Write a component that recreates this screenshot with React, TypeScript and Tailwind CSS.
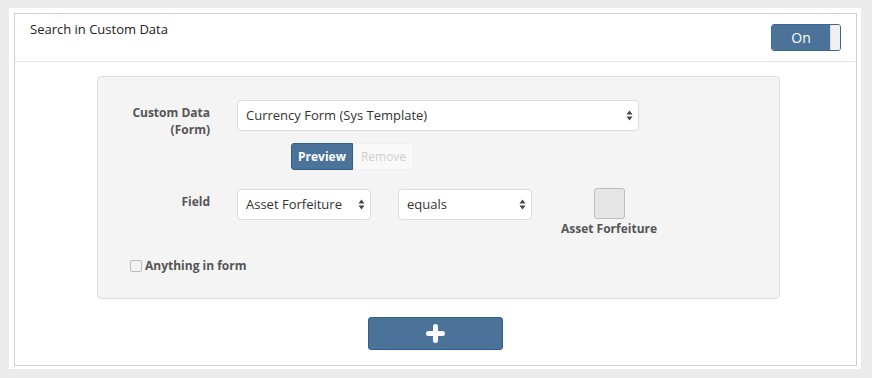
import React from "react";

const font = { fontFamily: '"Open Sans", "Liberation Sans", sans-serif' };

function Arrows() {
  return (
    <svg width="7" height="11" viewBox="0 0 7 11" className="shrink-0">
      <path d="M3.5 0.5 L6.5 4.5 L0.5 4.5 Z" fill="#444" />
      <path d="M3.5 10.5 L6.5 6.5 L0.5 6.5 Z" fill="#444" />
    </svg>
  );
}

function Select({ text, w }: { text: string; w: string }) {
  return (
    <div
      className={`${w} h-[31px] bg-white border border-[#dcdcdc] rounded-[4px] flex items-center justify-between pl-[8px] pr-[5px] text-[13px] text-[#333]`}
    >
      <span>{text}</span>
      <Arrows />
    </div>
  );
}

export default function App() {
  return (
    <div className="w-[872px] h-[378px] bg-[#ebebeb] pt-[8px] pl-[9px]" style={font}>
      <div className="w-[852px] h-[361px] bg-white pt-[5px] pl-[5px] pr-[4px] pb-[3px]">
        <div className="h-full border border-[#d2d2d2] flex flex-col">
          {/* header */}
          <div className="h-[48px] border-b border-[#e3e3e3] flex justify-between shrink-0">
            <div className="pl-[15px] pt-[6px] text-[13px] text-[#222]">Search in Custom Data</div>
            <div className="mt-[10px] mr-[15px] h-[27px] flex rounded-[3px] overflow-hidden border border-[#3c6690]">
              <div className="w-[58px] bg-[#4b739a] text-white text-[14px] flex items-center justify-center">On</div>
              <div className="w-[10px] bg-[#efefef] border-l border-[#dcdcdc]" />
            </div>
          </div>

          {/* body */}
          <div className="flex flex-col">
            <div className="ml-[82px] mt-[14px] w-[683px] h-[223px] bg-[#f4f4f4] border border-[#dedede] rounded-[4px] pt-[23px] pl-[15px]">
              {/* row 1 */}
              <div className="flex">
                <div className="w-[97px] text-right text-[12px] font-bold text-[#555] leading-[17px] pt-[4px]">
                  Custom Data (Form)
                </div>
                <div className="ml-[27px] flex flex-col">
                  <Select text="Currency Form (Sys Template)" w="w-[402px]" />
                  <div className="ml-[54px] mt-[12px] flex">
                    <div className="w-[62px] h-[27px] bg-[#4b739a] border border-[#2f5f8a] rounded-l-[3px] text-white text-[12px] font-bold flex items-center justify-center">
                      Preview
                    </div>
                    <div className="w-[61px] h-[27px] bg-[#f9f9f9] border border-[#efefef] rounded-r-[3px] text-[#cfcfcf] text-[12px] flex items-center justify-center">
                      Remove
                    </div>
                  </div>
                </div>
              </div>

              {/* row 2 */}
              <div className="flex mt-[19px]">
                <div className="w-[97px] text-right text-[12px] font-bold text-[#555] leading-[17px] pt-[4px]">Field</div>
                <div className="ml-[27px]">
                  <Select text="Asset Forfeiture" w="w-[134px]" />
                </div>
                <div className="ml-[27px]">
                  <Select text="equals" w="w-[134px]" />
                </div>
                <div className="ml-[28px] w-[98px] flex flex-col items-center -mt-[1px]">
                  <div className="w-[31px] h-[31px] bg-[#e5e5e5] border border-[#bdbdbd] rounded-[3px]" />
                  <div className="mt-[1px] text-[12px] font-bold text-[#555] leading-[17px] whitespace-nowrap">
                    Asset Forfeiture
                  </div>
                </div>
              </div>

              {/* row 3 */}
              <div className="flex items-center mt-[20px] pl-[17px]">
                <div className="w-[12px] h-[12px] bg-[#f3f3f3] border border-[#bcbcbc] rounded-[2px]" />
                <div className="ml-[3px] text-[12px] font-bold text-[#555]">Anything in form</div>
              </div>
            </div>

            <div className="flex justify-center mt-[18px]">
              <div className="w-[135px] h-[33px] bg-[#4b739a] border border-[#2f5f8a] rounded-[3px] flex items-center justify-center">
                <svg width="19" height="19" viewBox="0 0 19 19">
                  <path d="M9.5 2.5 V16.5 M2.5 9.5 H16.5" stroke="white" strokeWidth="5" strokeLinecap="round" />
                </svg>
              </div>
            </div>
          </div>
        </div>
      </div>
    </div>
  );
}
